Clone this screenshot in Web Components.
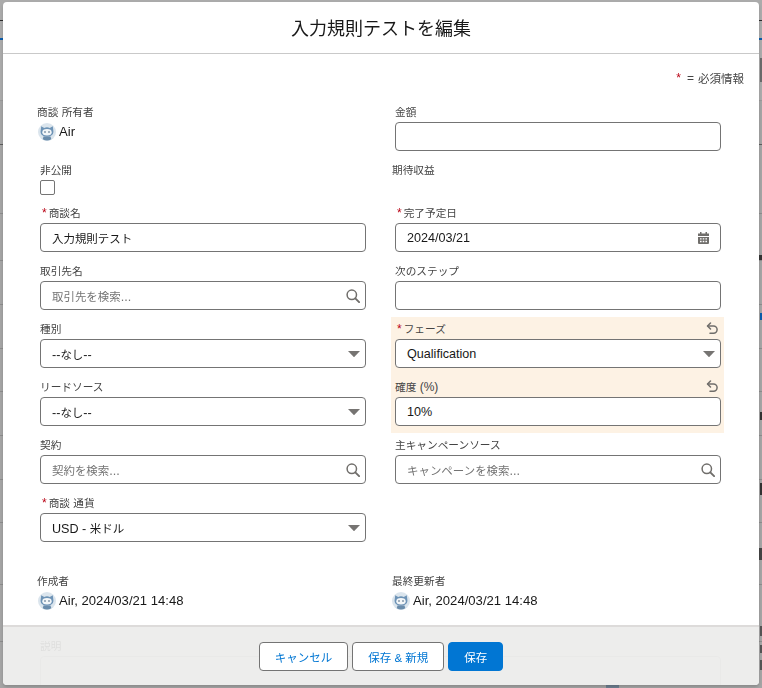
<!DOCTYPE html>
<html lang="ja"><head><meta charset="utf-8">
<style>
html,body{margin:0;height:100%;overflow:hidden}
body{background:#a5a5a5;font-family:"Liberation Sans","Noto Sans CJK JP",sans-serif;color:#181818}
</style></head><body>
<page-backdrop></page-backdrop>
<edit-modal heading="入力規則テストを編集">
  <form-row>
    <output-field label="商談 所有者" value="Air"></output-field>
    <text-field label="金額"></text-field>
  </form-row>
  <form-row short>
    <check-field label="非公開"></check-field>
    <output-field label="期待収益"></output-field>
  </form-row>
  <form-row>
    <text-field label="商談名" required value="入力規則テスト"></text-field>
    <text-field label="完了予定日" required value="2024/03/21" icon="calendar"></text-field>
  </form-row>
  <form-row>
    <text-field label="取引先名" placeholder="取引先を検索..." icon="search"></text-field>
    <text-field label="次のステップ"></text-field>
  </form-row>
  <form-row>
    <text-field label="種別" value="--なし--" icon="caret"></text-field>
    <text-field label="フェーズ" required value="Qualification" icon="caret" changed="first"></text-field>
  </form-row>
  <form-row>
    <text-field label="リードソース" value="--なし--" icon="caret"></text-field>
    <text-field label="確度 (%)" value="10%" changed="last"></text-field>
  </form-row>
  <form-row>
    <text-field label="契約" placeholder="契約を検索..." icon="search"></text-field>
    <text-field label="主キャンペーンソース" placeholder="キャンペーンを検索..." icon="search"></text-field>
  </form-row>
  <form-row>
    <text-field label="商談 通貨" required value="USD - 米ドル" icon="caret"></text-field>
    <div></div>
  </form-row>
  <form-row audit>
    <output-field label="作成者" value="Air, 2024/03/21 14:48"></output-field>
    <output-field label="最終更新者" value="Air, 2024/03/21 14:48" flush></output-field>
  </form-row>
  <text-field label="説明" area style="width:681px"></text-field>
  <action-button slot="actions">キャンセル</action-button>
  <action-button slot="actions">保存 &amp; 新規</action-button>
  <action-button slot="actions" brand>保存</action-button>
</edit-modal>
<script>
const ICONS={
 calendar:'<svg width="11" height="12" viewBox="0 0 11 12"><path fill="#706e6b" fill-rule="evenodd" d="M2 0h1.500v1.500h4V0H9v1.500h2V4H0V1.500h2zM0 5h11v6a1 1 0 0 1-1 1H1a1 1 0 0 1-1-1zm2 1.200v1.400h1.600V6.200zm2.700 0v1.400h1.600V6.200zm2.700 0v1.400H9V6.200zM2 8.700v1.500h1.600V8.700zm2.700 0v1.500h1.600V8.700zm2.700 0v1.500H9V8.700z"/></svg>',
 search:'<svg width="14" height="14" viewBox="0 0 14 14" fill="none" stroke="#706e6b"><circle cx="5.800" cy="5.800" r="4.700" stroke-width="1.500"/><path d="M9.300 9.300l3.800 3.800" stroke-width="1.900" stroke-linecap="round"/></svg>',
 caret:'<svg width="12" height="6" viewBox="0 0 12 6"><path fill="#767472" d="M0 0h12L6.500 5.800a.7.7 0 0 1-1 0z"/></svg>'
};
const AVATAR='<svg width="18" height="18" viewBox="0 0 18 18"><circle cx="9" cy="9" r="9" fill="#dbe5ed"/><path fill="#6d93b6" d="M3.200 3.200l3 1.700a7 7 0 0 1 5.600 0l3-1.700.5 4.300c.7 3.300-1.500 6.200-6.300 6.200S2 10.800 2.700 7.500z"/><ellipse cx="9" cy="9.300" rx="4.700" ry="3.300" fill="#f3f6f8"/><circle cx="7" cy="9" r=".8" fill="#3c5a78"/><circle cx="11" cy="9" r=".8" fill="#3c5a78"/><path fill="#6a8cab" d="M5.500 13.500h7l.8 2.800a9 9 0 0 1-8.600 0z"/></svg>';
function define(name,css,render){
  customElements.define(name,class extends HTMLElement{
    connectedCallback(){
      if(this.shadowRoot)return;
      this.attachShadow({mode:'open'}).innerHTML='<style>'+css+'</style>'+render(this);
    }
  });
}
const a=(e,n)=>e.getAttribute(n)||'';
/* CJK runs are set a little smaller than the Latin text, as in the reference */
const fmt=t=>t.replace(/[\u3000-\u30ff\u3400-\u9fff]+/g,m=>'<span class="c">'+m+'</span>');
const LABEL='.c{font-size:.89em}.lab{font-size:12px;line-height:18px;color:#444;display:block;white-space:nowrap;margin:-1px 0 1px}.req{color:#ba0517;margin:0 2px 0 2px}';

define('page-backdrop',`
 :host{display:flex;flex-direction:column;position:fixed;inset:0;overflow:hidden}
 i{display:block;flex:none;box-sizing:border-box;border-bottom:1px solid #8c8c8c}
 b{position:absolute;display:block;background:#666}
`,()=>{
  const ys=[[21,'#2b2b2b'],[40,'#0b5cab',2],[101,'#999'],[145,'#5c5c5c'],[214],[261],[305],[349],[392],[436],[480],[523],[585],[642]];
  let prev=0,h='';
  for(const [y,c,w] of ys){h+=`<i style="height:${y-prev}px;${c?'border-color:'+c+';':''}${w?'border-bottom-width:'+w+'px;':''}${y<=101?'background:#ababab':''}"></i>`;prev=y;}
  const bits=[[760,58,2,24,'#6b6b6b'],[759,255,3,5,'#333'],[760,313,2,7,'#0b5cab'],[760,412,2,8,'#333'],[760,483,2,12,'#333'],[759,548,3,12,'#444'],[760,626,2,10,'#555'],[760,645,2,8,'#555'],[760,660,2,10,'#555'],[606,685,13,3,'#6f7f90']];
  for(const [x,y,w,ht,c] of bits)h+=`<b style="left:${x}px;top:${y}px;width:${w}px;height:${ht}px;background:${c}"></b>`;
  return h;
});

define('edit-modal',`
 :host{display:block;position:absolute;left:3px;top:2px;width:756px;height:683px;background:#fff;border-radius:4px;overflow:hidden;box-shadow:0 2px 3px rgba(0,0,0,.16)}
 header{height:51px;box-sizing:content-box;border-bottom:1px solid #c9c9c9;display:flex;align-items:center;justify-content:center;font-size:18px;color:#181818}
 header div{margin-bottom:2px}
 .c{font-size:.96em}
 .legend{display:flex;justify-content:flex-end;align-items:center;height:18px;margin-top:15px;padding-right:15px;font-size:12px;color:#444}
 .legend b{color:#ba0517;font-weight:400;margin-right:6px}
 .legend em{font-style:normal;margin-right:4px}
 .form{display:flex;flex-direction:column;padding:17px 38px 0 37px}
 footer{position:absolute;left:0;right:0;bottom:0;height:60px;box-sizing:border-box;background:rgba(236,235,234,.92);border-top:2px solid #dddbda;display:flex;justify-content:center;align-items:flex-start;gap:4px;padding:15px 0 0}
`,e=>`<header><div>${a(e,'heading')}</div></header>
 <div class="legend"><b>*</b><em>=</em>${fmt('必須情報')}</div>
 <div class="form"><slot></slot></div>
 <footer><slot name="actions"></slot></footer>`);

define('form-row',`
 :host{display:grid;grid-template-columns:326px 326px;column-gap:29px;height:58px}
 :host([short]){height:43px}
 :host([audit]){margin-top:20px;height:65px}
`,()=>'<slot></slot>');

define('text-field',LABEL+`
 :host{display:block;position:relative}
 :host([changed]){background:#fdf2e4;margin:0 -3px 0 -4px;padding:0 3px 0 4px}
 :host([changed="first"]){margin-top:-4px;padding-top:4px;height:58px;align-self:start}
 :host([changed="last"]){height:54px;align-self:start}
 :host([changed]) .undo{position:absolute;right:5px;top:1px;display:block}
 :host([changed="first"]) .undo{top:5px}
 .undo{display:none}
 .box{height:29px;box-sizing:border-box;border:1px solid #747474;border-radius:4px;background:#fff;display:flex;align-items:center;padding:0 5px 0 11px;font-size:12.600px;color:#181818}
 .box .c{font-size:.91em}
 .box span.v{flex:1;white-space:nowrap}
 .ph{color:#747474}
 .ic{display:flex;align-items:center}
 .ic.calendar{margin-right:6px}
 :host([area]) .box{height:60px;border-color:#c9c9c9}
`,e=>{
  const v=a(e,'value'),p=a(e,'placeholder'),i=a(e,'icon');
  return `<span class="lab">${e.hasAttribute('required')?'<span class="req">*</span>':''}${fmt(a(e,'label'))}</span>
  <svg class="undo" width="13" height="12" viewBox="0 0 13 12" fill="none" stroke="#706e6b" stroke-width="1.500"><path d="M4.500 1L1.500 4l3 3" stroke-linecap="round" stroke-linejoin="round"/><path d="M2 4h5.500a3.600 3.600 0 0 1 0 7.200H4" stroke-linecap="round"/></svg>
  <div class="box"><span class="v ${p?'ph':''}">${fmt(v||p)}</span>${i?`<div class="ic ${i}">${ICONS[i]}</div>`:''}</div>`;
});

define('output-field',LABEL+`
 :host{display:block;margin-left:-3px}
 .val{display:flex;align-items:center;gap:3px;font-size:13.100px;height:20px;margin-top:1px;margin-left:1px;color:#181818;white-space:nowrap}
 :host([flush]) .val{margin-left:0}
 .val span{margin-bottom:2px}
`,e=>`<span class="lab">${fmt(a(e,'label'))}</span>${a(e,'value')?`<div class="val">${AVATAR}<span>${a(e,'value')}</span></div>`:''}`);

define('check-field',LABEL+`
 :host{display:block}
 .cb{display:block;width:15px;height:15px;box-sizing:border-box;border:1px solid #747474;border-radius:2px;background:#fff}
`,e=>`<span class="lab">${fmt(a(e,'label'))}</span><span class="cb"></span>`);

define('action-button',`
 :host{display:inline-flex;align-items:center;justify-content:center;height:29px;box-sizing:border-box;padding:0 15px;border:1px solid #747474;border-radius:4px;background:#fff;color:#0176d3;font-size:11.500px;white-space:nowrap}
 :host([brand]){background:#0176d3;border-color:#0176d3;color:#fff}
`,()=>'<slot></slot>');
</script>
</body></html>
